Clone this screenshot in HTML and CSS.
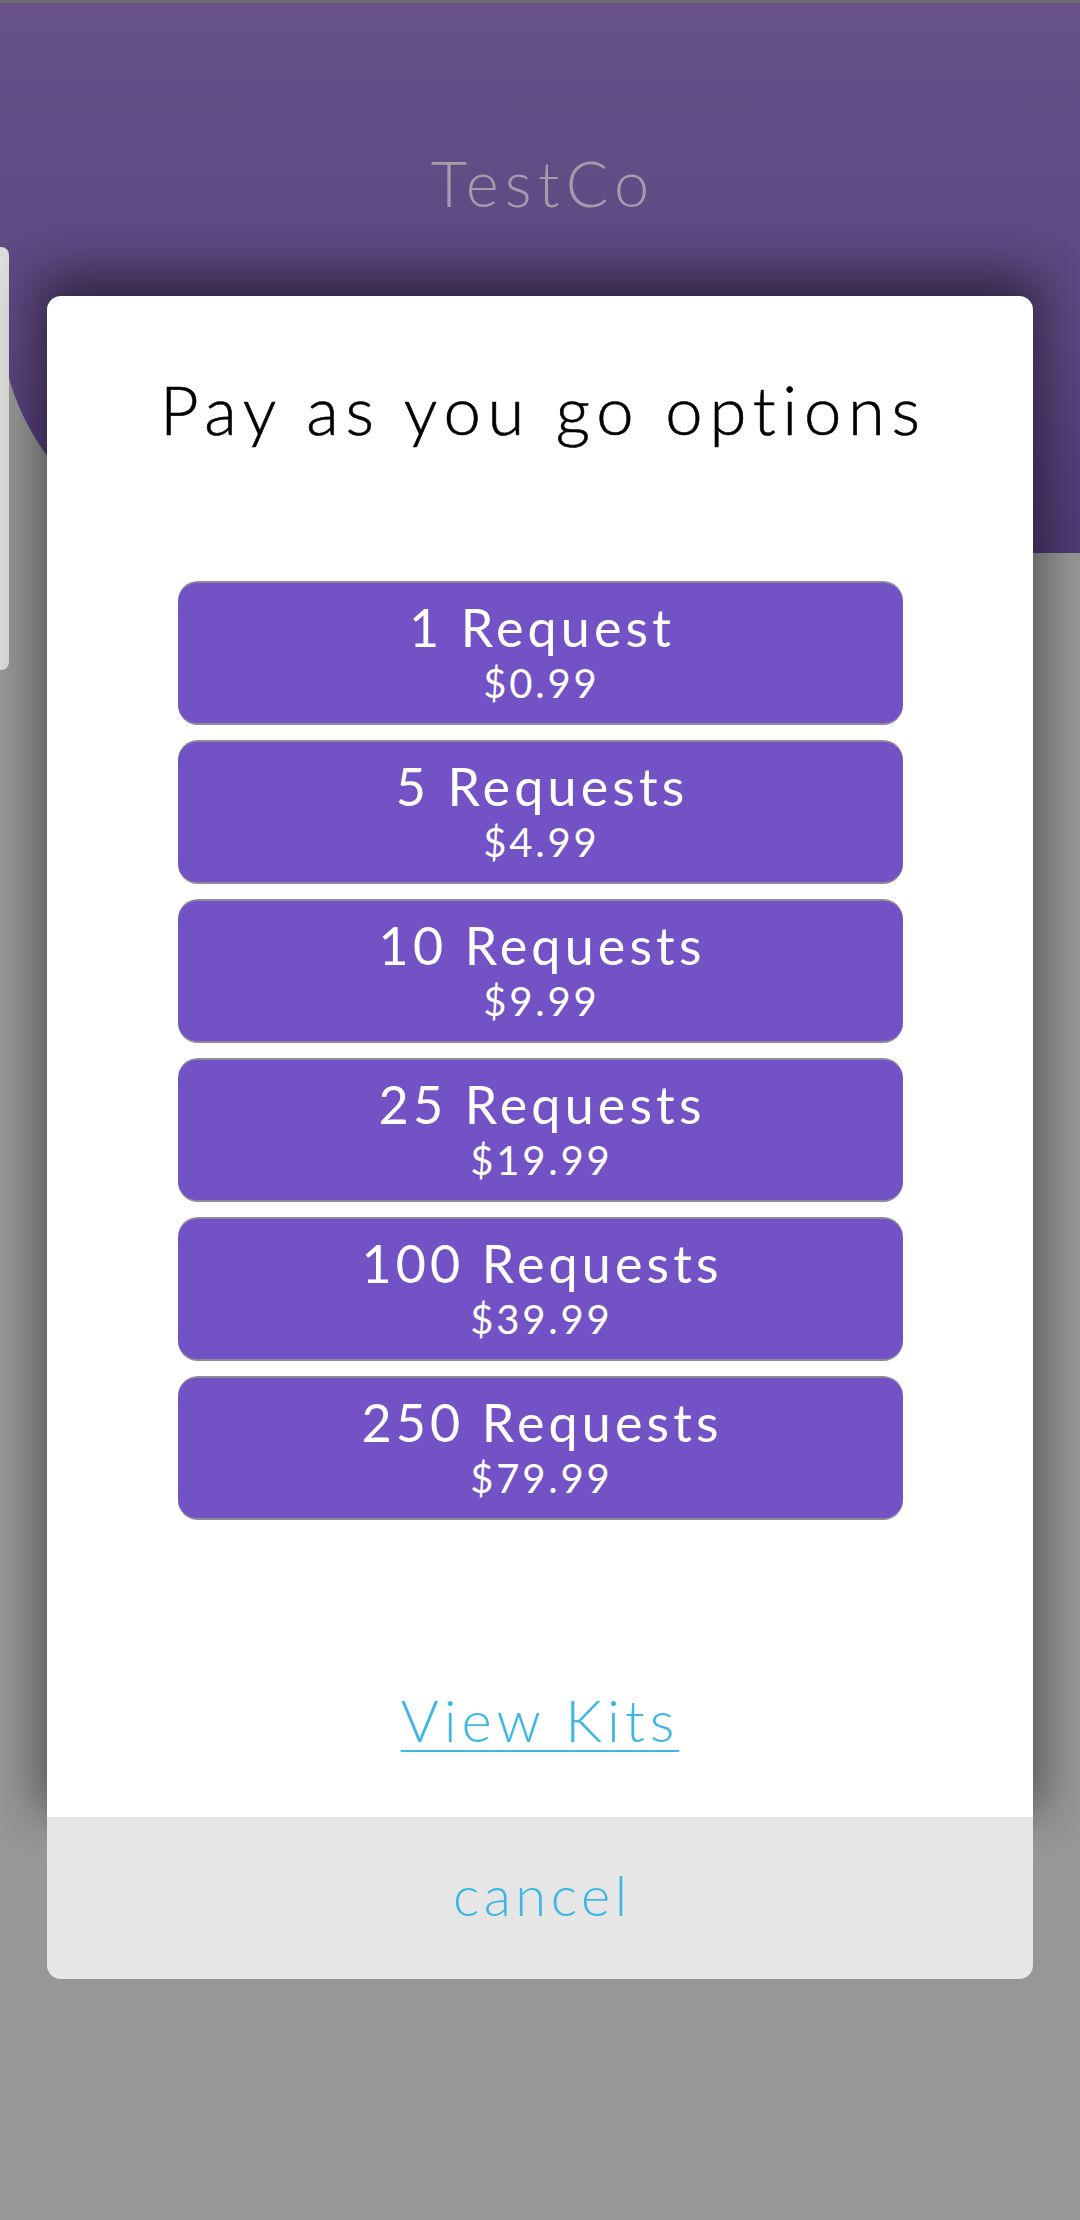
FILE: index.html
```html
<!DOCTYPE html>
<html lang="en">
<head>
<meta charset="utf-8">
<title>TestCo - Pay as you go options</title>
<link rel="stylesheet" href="styles.css">
</head>
<body>
  <div class="screen">
    <header class="app-header">
      <div class="brand">TestCo</div>
    </header>
    <div class="drawer-handle"></div>

    <div class="dialog">
      <div class="dialog-body">
        <h1 class="dialog-title">Pay as you go options</h1>
        <div class="options">
          <button class="option"><span class="option-name">1 Request</span><span class="option-price">$0.99</span></button>
          <button class="option"><span class="option-name">5 Requests</span><span class="option-price">$4.99</span></button>
          <button class="option"><span class="option-name">10 Requests</span><span class="option-price">$9.99</span></button>
          <button class="option"><span class="option-name">25 Requests</span><span class="option-price">$19.99</span></button>
          <button class="option"><span class="option-name">100 Requests</span><span class="option-price">$39.99</span></button>
          <button class="option"><span class="option-name">250 Requests</span><span class="option-price">$79.99</span></button>
        </div>
        <div class="kits-row"><a class="kits-link" href="#">View Kits</a></div>
      </div>
      <div class="dialog-cancel">cancel</div>
    </div>
  </div>
</body>
</html>
```

FILE: styles.css
```css
html, body {
  margin: 0;
  padding: 0;
}

body {
  background: #979797;
  font-family: Lato, "Open Sans", "Liberation Sans", sans-serif;
  width: 1080px;
  height: 2220px;
  overflow: hidden;
}

.screen {
  position: relative;
  width: 1080px;
  height: 2220px;
}

.app-header {
  box-sizing: border-box;
  height: 553px;
  border-top: 3px solid #6a6a6a;
  border-bottom-left-radius: 240px;
  background: linear-gradient(180deg, #665289 0%, #5c4780 60%, #533e78 85%, #4e3a72 100%);
  padding-top: 142px;
}

.brand {
  text-align: center;
  color: #a49cac;
  font-size: 63px;
  line-height: 76px;
  font-weight: 300;
  letter-spacing: 0.1em;
  padding-left: 0.1em;
}

.drawer-handle {
  position: absolute;
  left: 0;
  top: 247px;
  width: 9px;
  height: 423px;
  background: #dddddd;
  border-radius: 0 8px 8px 0;
}

.dialog {
  position: absolute;
  left: 47px;
  top: 296px;
  width: 986px;
  display: flex;
  flex-direction: column;
}

.dialog-body {
  background: #ffffff;
  border-radius: 14px 14px 0 0;
  padding-top: 73px;
  height: 1521px;
  box-sizing: border-box;
  box-shadow: 0 -14px 48px 8px rgba(0, 0, 0, 0.48);
  display: flex;
  flex-direction: column;
  align-items: center;
}

.dialog-title {
  margin: 0;
  font-size: 67px;
  line-height: 80px;
  font-weight: 300;
  color: #000000;
  letter-spacing: 0.1em;
  padding-left: 0.1em;
  text-align: center;
  -webkit-text-stroke: 0.6px #000000;
}

.options {
  margin-top: 132px;
  display: flex;
  flex-direction: column;
  gap: 15px;
  width: 725px;
}

.option {
  box-sizing: border-box;
  height: 144px;
  width: 100%;
  margin: 0;
  padding: 13px 0 0;
  border: 0;
  border-top: 2px solid #8e889a;
  border-bottom: 2px solid #8e889a;
  border-radius: 20px;
  background: #7352c6;
  color: #ffffff;
  font-family: inherit;
  display: flex;
  flex-direction: column;
  align-items: center;
  cursor: pointer;
}

.option-name {
  font-size: 52px;
  line-height: 63px;
  font-weight: 400;
  letter-spacing: 0.08em;
  padding-left: 0.08em;
}

.option-price {
  font-size: 40px;
  line-height: 48px;
  font-weight: 400;
  letter-spacing: 0.07em;
  padding-left: 0.07em;
}

.kits-row {
  margin-top: 165px;
  text-align: center;
}

.kits-link {
  font-size: 58px;
  line-height: 70px;
  font-weight: 300;
  color: #3db7e4;
  letter-spacing: 0.085em;
  text-decoration: underline;
  text-decoration-thickness: 2px;
  text-underline-offset: 8px;
}

.dialog-cancel {
  position: relative;
  height: 162px;
  box-sizing: border-box;
  padding-bottom: 6px;
  background: #e6e6e6;
  border-radius: 0 0 14px 14px;
  text-align: center;
  font-size: 56px;
  line-height: 156px;
  font-weight: 300;
  color: #3db7e4;
  letter-spacing: 0.08em;
  padding-left: 0.08em;
}
```
